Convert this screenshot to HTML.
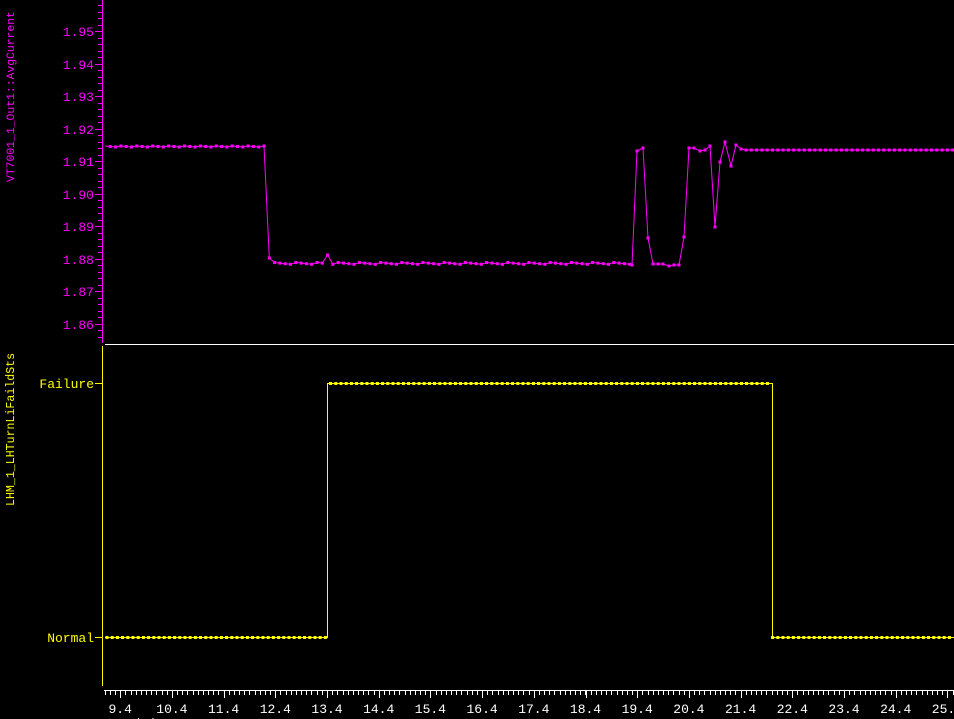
<!DOCTYPE html>
<html><head><meta charset="utf-8"><style>
html,body{margin:0;padding:0;background:#000;width:954px;height:719px;overflow:hidden}
svg{display:block}
</style></head><body>
<svg id="s" width="954" height="719" xmlns="http://www.w3.org/2000/svg" font-family="Liberation Mono, DejaVu Sans Mono, monospace">
<rect width="954" height="719" fill="#000"/>
<line x1="102.5" y1="0" x2="102.5" y2="343" stroke="#f0f" stroke-width="1"/>
<line x1="105" y1="344.5" x2="954" y2="344.5" stroke="#fff" stroke-width="1"/>
<line x1="102.5" y1="346" x2="102.5" y2="686" stroke="#ff0" stroke-width="1"/>
<line x1="104" y1="690.5" x2="954" y2="690.5" stroke="#fff" stroke-width="1"/>
<g id="g"></g>
<text transform="translate(14,182) rotate(-90)" fill="#f0f" style="font-size:11.4px">VT7001_1_Out1::AvgCurrent</text>
<text transform="translate(14,506) rotate(-90)" fill="#ff0" style="font-size:11.6px">LHM_1_LHTurnLiFaildSts</text>
<text x="94" y="388" fill="#ff0" text-anchor="end" style="font-size:13px">Failure</text>
<line x1="95" y1="383.5" x2="102" y2="383.5" stroke="#ff0"/>
<text x="94" y="642" fill="#ff0" text-anchor="end" style="font-size:13px">Normal</text>
<line x1="95" y1="637.5" x2="102" y2="637.5" stroke="#ff0"/>
<text x="104" y="727" fill="#fff" style="font-size:12px">2024/3/27  9:55:4 ...</text>
</svg>
<script>
var g=document.getElementById('g'),h='';
var labs=['1.95','1.94','1.93','1.92','1.91','1.90','1.89','1.88','1.87','1.86'];
for(var i=0;i<10;i++){var y=Math.round(31+i*32.5)+0.5;h+='<line x1="95" y1="'+y+'" x2="102" y2="'+y+'" stroke="#f0f"/>';
h+='<text x="94" y="'+(y+4.5)+'" fill="#f0f" text-anchor="end" style="font-size:13px">'+labs[i]+'</text>';}
for(var y=31-6.5*4;y<342;y+=6.5){h+='<line x1="98" y1="'+Math.round(y)+'.5" x2="102" y2="'+Math.round(y)+'.5" stroke="#f0f"/>';}
var xl=['9.4','10.4','11.4','12.4','13.4','14.4','15.4','16.4','17.4','18.4','19.4','20.4','21.4','22.4','23.4','24.4','25.4'];
for(var i=0;i<17;i++){var x=120.2+i*51.7;h+='<line x1="'+Math.round(x)+'.5" y1="691" x2="'+Math.round(x)+'.5" y2="698" stroke="#fff"/>';
h+='<text x="'+x+'" y="713" fill="#fff" text-anchor="middle" style="font-size:13px">'+xl[i]+'</text>';}
for(var x=120.2-5.17*3;x<954;x+=5.17){h+='<line x1="'+Math.round(x)+'.5" y1="691" x2="'+Math.round(x)+'.5" y2="695" stroke="#fff"/>';}
var pts=[],x=105,k=0;
var special=[[632,265],[637,151],[643,148],[648,238],[653,264],[658,264],[663,264],[669,266],[674,265],[679,265],[684,237],[689,148],[694,148],[700,151],[705,150],[710,146],[715,227],[720,162],[725,142],[731,166],[736,145],[741,149]];
for(x=105;x<630;x+=5.3){var y;
 if(x<265) y=146+((k*7)%3)*0.5;
 else if(x<270) y=258;
 else if(Math.abs(x-326)<3) y=255;
 else y=262.5+((k*5)%4)*0.6;
 pts.push([x,y]);k++;}
special.forEach(function(p){pts.push(p)});
for(x=746;x<956;x+=5.3){pts.push([x,150+((k*3)%3)*0.5]);k++;}
var pl=pts.map(function(p){return p[0].toFixed(1)+','+p[1]}).join(' ');
h+='<polyline points="'+pl+'" fill="none" stroke="#f0f" stroke-width="1"/>';
pts.forEach(function(p){if(p[0]>106)h+='<rect x="'+(p[0]-1.5)+'" y="'+(p[1]-1.5)+'" width="3" height="3" fill="#f0f"/>';});
h+='<polyline points="105,637.5 327.5,637.5 327.5,383.5 772.5,383.5 772.5,637.5 954,637.5" fill="none" stroke="#ff0"/>';
for(x=107;x<954;x+=5.2){var y=(x>327&&x<772)?383.5:637.5;h+='<rect x="'+(x-1.5)+'" y="'+(y-1.5)+'" width="3" height="3" fill="#ff0"/>';}
g.innerHTML=h;
</script>
</body></html>
